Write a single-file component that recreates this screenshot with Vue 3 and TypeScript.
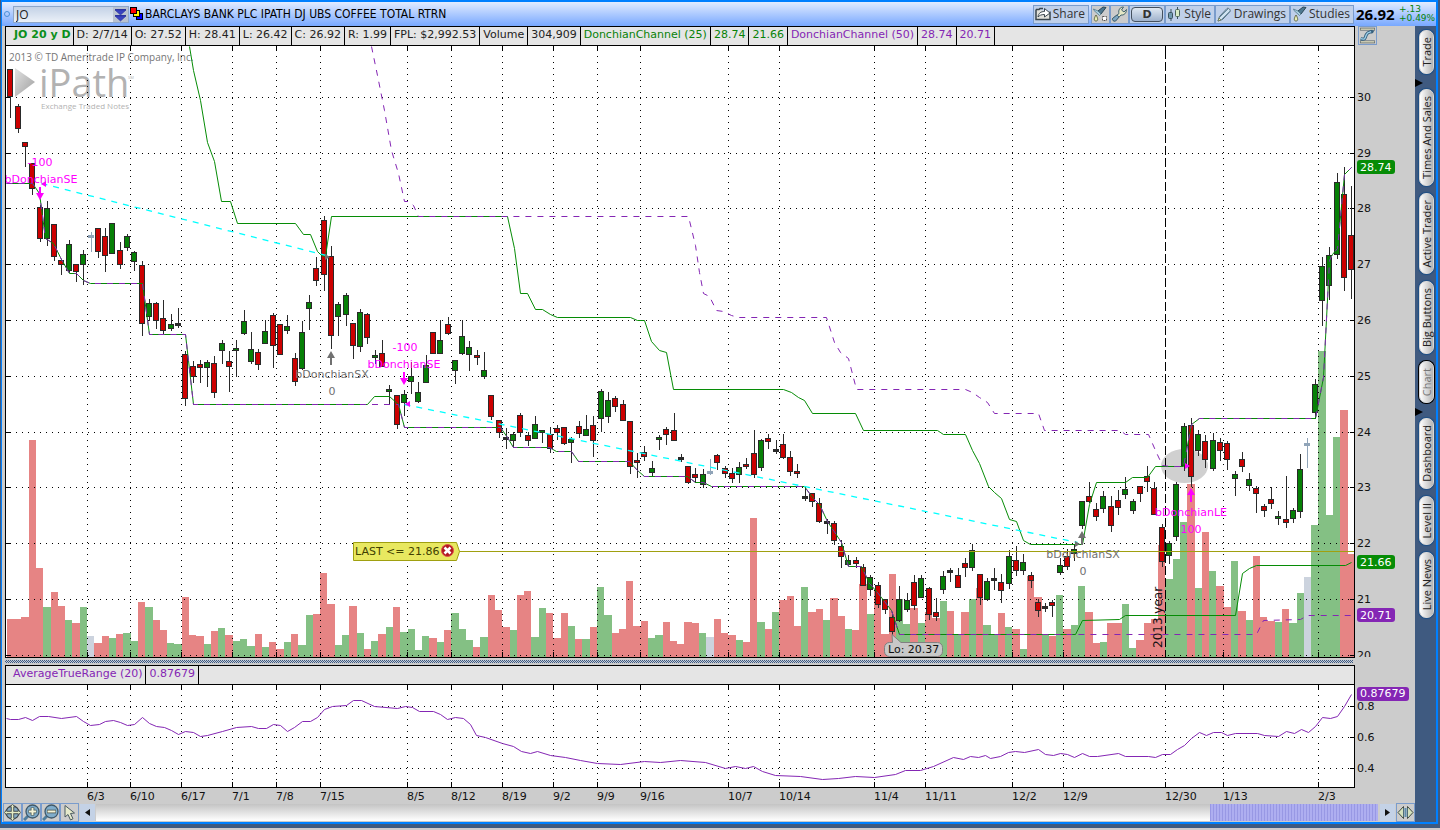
<script setup lang="ts">
import { ref } from 'vue'

type Cell = { text: string; tone: string }
type Pt = [number, number]

const symbol = ref('JO')
const scroll = ref(100)

const priceCells: Cell[] = [
  { text: 'JO 20 y D', tone: 'lead' },
  { text: 'D: 2/7/14', tone: '' },
  { text: 'O: 27.52', tone: '' },
  { text: 'H: 28.41', tone: '' },
  { text: 'L: 26.42', tone: '' },
  { text: 'C: 26.92', tone: '' },
  { text: 'R: 1.99', tone: '' },
  { text: 'FPL: $2,992.53', tone: '' },
  { text: 'Volume', tone: '' },
  { text: '304,909', tone: '' },
  { text: 'DonchianChannel (25)', tone: 'green' },
  { text: '28.74', tone: 'green' },
  { text: '21.66', tone: 'green' },
  { text: 'DonchianChannel (50)', tone: 'violet' },
  { text: '28.74', tone: 'violet' },
  { text: '20.71', tone: 'violet' },
]

const tabs = [
  { text: 'Trade', mark: false, active: false },
  { text: 'Times And Sales', mark: true, active: false },
  { text: 'Active Trader', mark: false, active: false },
  { text: 'Big Buttons', mark: false, active: false },
  { text: 'Chart', mark: false, active: true },
  { text: 'Dashboard', mark: true, active: false },
  { text: 'Level II', mark: false, active: false },
  { text: 'Live News', mark: false, active: false },
]

const dates: { x: number; text: string }[] = [
  { x: 87, text: '6/3' }, { x: 130, text: '6/10' }, { x: 181, text: '6/17' },
  { x: 232, text: '7/1' }, { x: 276, text: '7/8' }, { x: 320, text: '7/15' },
  { x: 407, text: '8/5' }, { x: 451, text: '8/12' }, { x: 502, text: '8/19' },
  { x: 553, text: '9/2' }, { x: 597, text: '9/9' }, { x: 640, text: '9/16' },
  { x: 728, text: '10/7' }, { x: 779, text: '10/14' }, { x: 874, text: '11/4' },
  { x: 925, text: '11/11' }, { x: 1012, text: '12/2' }, { x: 1063, text: '12/9' },
  { x: 1165, text: '12/30' }, { x: 1223, text: '1/13' }, { x: 1318, text: '2/3' },
]
const yearX = 1165
const levels = [
  { y: 97, text: '30' }, { y: 153, text: '29' }, { y: 208, text: '28' }, { y: 264, text: '27' },
  { y: 320, text: '26' }, { y: 376, text: '25' }, { y: 432, text: '24' }, { y: 487, text: '23' },
  { y: 543, text: '22' }, { y: 599, text: '21' }, { y: 655, text: '20' },
]
const rangeLevels = [
  { y: 706, text: '0.8' }, { y: 737, text: '0.6' }, { y: 768, text: '0.4' },
]

const barX = (i: number) => 10.4 + i * 7.287

/* volume: top of each bar and its tone (r down, g up, n unchanged) */
const volumeText = `619r 619r 617r 440r 568r 607g 592r 606r 620g 623r 607g 636n 643r 636r 638g 634r 633g 641g 602r 607g
620r 630r 643g 644g 597r 635r 636r 644g 631r 628g 635r 641g 639g 646g 634r 647g 642r 649r 642g 634r
645g 615g 614r 573r 604r 645g 635g 606r 633g 649r 641g 634r 627g 607r 632g 629g 650g 636g 638r 642g
630r 613g 629g 640g 647r 637g 595r 610r 627r 630g 595r 591r 637g 608g 613r 638r 613r 626g 639r 639g
627r 587g 615g 633r 629r 581r 626r 621r 638g 635g 622r 641r 644r 622r 623r 633g 637n 619r 633r 635r
640g 642r 518r 622g 629r 612g 600r 596r 626r 587g 612r 609r 620g 598r 616r 629g 630r 584r 614g 590r
634r 574r 599g 624g 608r 623g 612r 618r 601g 611r 634g 612r 599g 588r 625g 635g 613r 627g 629r 649g
576r 597r 635g 636r 595g 629r 625g 586g 612r 643r 642g 623r 623r 604g 648g 640r 623r 619r 545r 579g
559g 522g 484r 588g 532r 571g 586r 607r 561g 611r 620g 556r 617r 621r 622g 609r 623g 593g 577n 525g
351g 515g 437g 410r 554r`
const volumes = volumeText.split(/\s+/).map((s, i) => {
  const left = Math.round(barX(i) - 3.6)
  return { x: left, w: Math.round(barX(i + 1) - 3.6) - left, y: parseInt(s), tone: s.slice(-1) }
})

/* candles: high, body top, body bottom, low, tone */
const candleText = `69,69,96,117r 104,106,128,132r 142,142,146,166r 163,163,188,194r 205,207,238,241r 201,208,238,245g
224,224,256,260r 259,260,264,274r 240,244,270,272g 264,264,271,281r 250,254,264,284g 232,235,237,251n
228,228,251,257r 228,236,255,271r 223,223,253,253g 242,250,264,268r 234,236,247,250g 251,252,261,270g
261,265,323,335r 299,303,316,320g 302,303,320,328r 300,318,330,334r 314,324,328,330g 308,323,325,327d
351,354,398,405r 361,366,376,382r 360,364,367,382r 360,362,367,386g 356,363,392,397r 340,343,350,363g
351,361,366,391r 340,348,350,376g 310,321,333,334g 332,349,361,363g 349,352,364,369r 320,331,343,343g
313,315,345,367r 324,324,354,354r 315,326,330,333g 353,358,381,385r 321,332,368,369g 295,302,308,329g
257,268,280,285r 216,220,274,290r 246,256,335,348r 302,304,316,335g 293,295,314,325g 323,323,345,358r
309,312,346,351g 313,314,337,343r 350,355,357,363g 340,353,366,366r 385,389,391,404g 395,395,424,428r
390,394,402,415g 362,376,381,393g 382,392,401,402g 355,365,382,382g 332,332,353,353r 320,340,353,353g
317,324,333,334r 360,360,370,383g 320,336,353,354g 341,347,354,370g 350,355,357,364r 352,370,376,378g
395,395,416,419r 420,420,432,437r 428,437,439,448d 432,434,440,447g 413,415,432,436r 432,435,440,445r
416,424,438,438g 430,430,432,442g 427,434,448,452r 425,428,432,439r 427,427,443,444r 437,439,442,462g
421,426,433,437r 415,429,435,435g 416,425,440,456r 389,391,418,431g 392,400,416,422g 396,398,406,411r
400,404,420,420r 421,421,466,473r 453,460,462,477r 446,452,456,460r 461,468,472,475g 435,437,439,449g
427,429,434,444r 413,430,440,440r 454,457,459,461d 466,466,482,483r 468,474,477,482r 469,474,484,487g
459,471,473,474n 454,455,462,469r 466,468,473,477r 468,473,478,482r 462,467,474,482g 458,464,466,468r
430,453,474,477r 439,440,467,470g 434,438,441,448r 440,449,451,453d 434,444,457,458r 451,457,471,475r
464,471,473,477r 486,496,498,500d 493,493,501,506r 498,503,521,522r 519,521,523,533d 521,523,540,544r
540,546,556,567r 555,560,564,565g 557,560,563,567r 564,567,585,585r 575,577,589,595g 582,585,604,607r
599,599,609,613r 612,617,631,635r 586,599,620,621g 593,600,609,611g 575,582,605,609r 575,578,597,597g
587,588,614,619r 598,612,616,620r 571,576,589,593g 568,570,572,581d 568,575,587,587r 558,563,567,576r
544,550,567,570g 574,574,597,604r 578,581,599,600g 568,578,580,589d 574,582,590,602r 550,556,583,588g
546,560,570,575r 554,562,570,574g 572,575,580,587r 599,602,610,616r 603,606,608,611d 600,602,605,616r
558,565,572,574g 549,556,566,569r 545,549,553,560g 501,501,525,528g 482,496,501,502r 503,509,516,520r
491,496,508,512g 496,506,525,531r 490,500,507,514r 477,489,494,498g 499,501,510,513g 486,486,493,501r
466,476,481,491r 482,488,514,514r 524,527,561,566r 541,543,555,563g 482,484,536,540g 423,426,465,470g
418,425,476,486r 430,434,450,455g 435,441,459,467r 433,440,468,470g 438,442,450,460r 441,443,459,469r
471,474,478,495g 452,459,466,471r 473,479,485,490g 486,488,493,512r 504,506,510,516r 487,499,503,508r
511,516,518,524g 476,519,522,527r 508,510,518,522g 454,469,511,517g 438,443,445,467n 379,384,412,418g
257,266,300,325g 247,255,285,299g 173,182,254,258g 167,194,277,290r 186,235,269,298r`
const candles = candleText.split(/\s+/).map((s, i) => {
  const [high, top, bottom, low] = s.slice(0, -1).split(',').map(Number)
  return { x: Math.round(barX(i)), high, top, h: Math.max(bottom - top, 1), low, tone: s.slice(-1) }
})

const points = (p: Pt[]) => p.map((q) => q.join(',')).join(' ')

const closing: Pt[] = [[1183, 466], [1191, 424], [1199, 418], [1315, 418], [1323, 377], [1329, 260], [1332, 254], [1337, 248], [1344, 174], [1351, 167]]
const upper25 = points([
  [189, 46], [193, 70], [200, 100], [207, 142], [214, 161], [221, 201], [230, 201], [237, 223], [295, 223], [303, 234],
  [310, 234], [317, 251], [321, 255], [325, 256], [331, 216], [507, 216], [514, 248], [520, 293], [527, 293], [535, 309],
  [542, 309], [550, 314], [557, 317], [630, 317], [637, 320], [644, 320], [651, 341], [659, 350], [666, 352], [673, 389],
  [783, 389], [791, 392], [798, 397], [804, 400], [812, 413], [855, 413], [863, 430], [937, 430], [943, 434], [965, 434],
  [972, 450], [979, 463], [988, 486], [994, 492], [1001, 498], [1009, 519], [1016, 521], [1023, 540], [1030, 544],
  [1082, 544], [1089, 504], [1096, 482], [1125, 482], [1132, 477], [1147, 477], [1155, 466], ...closing,
])
const upper50 = points([
  [371, 46], [377, 75], [384, 110], [391, 150], [398, 173], [404, 201], [408, 201], [413, 205], [418, 216], [688, 216],
  [695, 245], [699, 272], [703, 293], [709, 296], [716, 310], [723, 311], [731, 315], [738, 317], [826, 317], [834, 342],
  [840, 352], [848, 358], [856, 389], [965, 389], [972, 392], [979, 397], [987, 402], [994, 413], [1038, 413], [1044, 430],
  [1120, 430], [1125, 434], [1148, 434], [1155, 450], [1162, 465], [1170, 466], ...closing,
])
const lowHead: Pt[] = [
  [6, 183], [32, 183], [39, 193], [45, 238], [53, 243], [61, 259], [69, 273], [76, 273], [83, 280], [90, 283], [142, 283],
  [149, 334], [185, 334], [193, 404],
]
const lowBody: Pt[] = [
  [398, 404], [404, 427], [500, 427], [507, 437], [513, 447], [549, 447], [556, 451], [571, 451], [578, 461], [629, 461],
  [637, 470], [644, 476], [687, 476], [695, 482], [703, 482], [711, 486], [804, 486], [812, 497], [819, 504], [827, 521],
  [841, 542], [848, 566], [861, 566], [869, 583], [877, 592], [891, 610], [899, 634],
]
const lower25 = points([
  ...lowHead, [367, 404], [374, 396], [389, 396], ...lowBody, [1075, 634], [1082, 620], [1119, 619], [1125, 615],
  [1235, 615], [1242, 573], [1249, 568], [1256, 565], [1345, 565], [1351, 562],
])
const lower50 = points([...lowHead, ...lowBody, [1256, 634], [1263, 620], [1300, 619], [1307, 615], [1351, 615]])

const averageRange = points([
  [6, 718], [10, 719], [18, 719], [25, 717], [32, 720], [39, 716], [48, 716], [61, 718], [76, 716], [83, 721], [90, 725],
  [99, 724], [105, 721], [113, 720], [120, 722], [127, 725], [134, 724], [142, 717], [149, 723], [156, 726], [164, 727],
  [171, 730], [178, 734], [185, 731], [193, 732], [200, 736], [207, 735], [222, 731], [236, 727], [251, 726], [258, 728],
  [266, 728], [273, 724], [280, 725], [287, 731], [294, 727], [302, 721], [310, 721], [317, 717], [324, 709], [332, 706],
  [346, 705], [353, 700], [361, 700], [374, 706], [397, 708], [405, 706], [412, 707], [419, 711], [433, 711], [440, 714],
  [447, 719], [455, 717], [463, 718], [470, 724], [476, 735], [485, 737], [502, 743], [513, 746], [521, 751], [530, 753],
  [537, 751], [550, 755], [565, 757], [580, 760], [597, 763], [620, 764], [644, 761], [660, 762], [680, 760], [705, 762],
  [725, 768], [735, 766], [745, 768], [753, 766], [762, 771], [775, 775], [800, 776], [822, 779], [838, 778], [855, 776],
  [874, 777], [895, 774], [905, 770], [920, 770], [933, 766], [953, 757], [963, 759], [970, 756], [978, 757], [985, 755],
  [990, 758], [1000, 756], [1008, 752], [1015, 751], [1024, 752], [1038, 749], [1045, 754], [1053, 755], [1060, 753],
  [1067, 754], [1074, 757], [1082, 753], [1089, 756], [1097, 756], [1118, 753], [1125, 756], [1148, 756], [1155, 757],
  [1162, 754], [1170, 754], [1177, 749], [1184, 745], [1191, 738], [1199, 732], [1206, 735], [1213, 732], [1221, 732],
  [1227, 735], [1235, 733], [1257, 733], [1264, 735], [1278, 736], [1286, 731], [1294, 733], [1301, 729], [1308, 732],
  [1315, 726], [1322, 717], [1330, 718], [1337, 716], [1344, 706], [1351, 694],
])

const orders = [
  { x: 40, y: 166, text: '-100', tone: 'sell' },
  { x: 41, y: 183, text: 'bDonchianSE', tone: 'sell' },
  { x: 332, y: 378, text: 'bDonchianSX', tone: 'exit' },
  { x: 332, y: 395, text: '0', tone: 'exit' },
  { x: 405, y: 351, text: '-100', tone: 'sell' },
  { x: 404, y: 368, text: 'bDonchianSE', tone: 'sell' },
  { x: 1083, y: 558, text: 'bDonchianSX', tone: 'exit' },
  { x: 1083, y: 575, text: '0', tone: 'exit' },
  { x: 1191, y: 516, text: 'bDonchianLE', tone: 'sell' },
  { x: 1191, y: 533, text: '100', tone: 'sell' },
]
const tags = [
  { y: 160, text: '28.74', tone: 'up' },
  { y: 555, text: '21.66', tone: 'up' },
  { y: 608, text: '20.71', tone: 'alt' },
]
</script>

<template>
  <div class="window">
    <header class="toolbar">
      <span class="dot"></span>
      <div class="symbol">
        <input v-model="symbol" aria-label="Symbol" type="text" />
        <button type="button" aria-label="Symbol list">
          <svg width="15" height="16" viewBox="0 0 15 16">
            <path d="M2 2.500h11M2 8.500h11" stroke="#3038a0" />
            <path d="M2 3h11l-5.500 5zM2 9h11l-5.500 5z" fill="#3a44c0" stroke="#26309a" stroke-width=".6" />
          </svg>
        </button>
      </div>
      <svg class="link" width="14" height="14" viewBox="0 0 14 14">
        <rect x="6.500" y="6.500" width="6" height="6" fill="#00f" stroke="#000" />
        <rect x="3.500" y="3.500" width="6" height="6" fill="#ff0" stroke="#000" />
        <rect x=".5" y=".5" width="6" height="6" fill="#f00" stroke="#000" />
      </svg>
      <h1>BARCLAYS BANK PLC IPATH DJ UBS COFFEE TOTAL RTRN</h1>
      <nav class="actions">
        <button type="button" class="share">
          <svg width="16" height="14" viewBox="0 0 16 14">
            <path d="M1 2.500h3l1-1h3M1 2.500v10h14v-8" fill="#e2e2dc" stroke="#3a464e" stroke-width="1.500" />
            <path d="M3 10c.5-4 3-5.500 6.500-5.500V1.500L15 6l-5.500 4V7.500C6 7.500 4.500 8.500 3 10z" fill="#fff" stroke="#3a464e" />
          </svg>
          Share
        </button>
        <button type="button" class="square gap" aria-label="Add study">
          <svg width="16" height="16" viewBox="0 0 16 16">
            <path d="M6 5 11 1l3 .5-5 6.500z" fill="#4e7890" stroke="#2c4858" />
            <path d="M1.500 3 6 5l3 3-1.500 1.500L2 4.500z" fill="#a9cfe0" stroke="#48707f" stroke-width=".7" />
            <path d="M4 9c-2 3-2.500 6 0 6s2-3 0-6z" fill="#e8efb4" stroke="#4b5030" stroke-width=".8" />
            <path d="M10.500 10.500h4v4h-4z" fill="#fff" stroke="#555" stroke-dasharray="2 1" />
          </svg>
        </button>
        <button type="button" class="square" aria-label="Settings">
          <svg width="16" height="16" viewBox="0 0 16 16">
            <path d="M1.500 12.500 8 7.500C7 4 9 1 12.500 1L10.500 4l2.500 2 2.500-2.500C15.500 7 13 9.500 10 9l-5.500 6c-2 .5-3.500-1-3-2.500z" fill="#e6e8c6" stroke="#42636e" />
            <path d="M1.500 12.500 6 9l2 2-3.500 4c-2 .5-3.500-1-3-2.500z" fill="#7ea7c2" stroke="#39586a" stroke-width=".8" />
          </svg>
        </button>
        <button type="button" class="period"><b>D</b></button>
        <button type="button" class="style">
          <svg width="14" height="16" viewBox="0 0 14 16">
            <path d="M4 3v12M10.500 1v12" stroke="#39535f" />
            <rect x="1.500" y="6.500" width="4" height="6" rx="1" fill="#6f99ad" stroke="#39535f" />
            <rect x="8.500" y="3.500" width="4" height="7" rx="1" fill="#d7ecc6" stroke="#4c6657" />
          </svg>
          Style
        </button>
        <button type="button" class="drawings">
          <svg width="15" height="15" viewBox="0 0 15 15">
            <path d="M1 14 2.500 9.500 10 1.500c1.500-1 4 1.500 3 3L5.500 12.500z" fill="#cfe2f0" stroke="#4b6879" />
            <path d="M3 10 11 2M5 12l8-8" stroke="#6c8ea4" fill="none" />
            <path d="M1 14l1-3 2 2z" fill="#f1eeb9" stroke="#57653d" stroke-width=".6" />
          </svg>
          Drawings
        </button>
        <button type="button" class="studies">
          <svg width="15" height="16" viewBox="0 0 15 16">
            <path d="M6 5 11 1l3 .5-5 6.500z" fill="#4e7890" stroke="#2c4858" />
            <path d="M1.500 3 6 5l3 3-1.500 1.500L2 4.500z" fill="#a9cfe0" stroke="#48707f" stroke-width=".7" />
            <path d="M4 9c-2 3-2.500 6 0 6s2-3 0-6z" fill="#e8efb4" stroke="#4b5030" stroke-width=".8" />
          </svg>
          Studies
        </button>
      </nav>
      <strong class="last">26.92</strong>
      <p class="change"><span>+.13</span><span>+0.49%</span></p>
    </header>

    <div class="body">
      <main class="charts">
        <div class="strip-row">
          <div class="strip">
            <span v-for="(c, i) in priceCells" :key="i" class="cell" :class="c.tone">{{ c.text }}</span>
          </div>
          <button type="button" class="curve" aria-label="Price scale">
            <svg width="17" height="17" viewBox="0 0 16 16">
              <path d="M1 2h14M1 14h14" stroke="#4a565c" stroke-width="2.400" />
              <path d="M1.500 2h13M1.500 14h13" stroke="#f3f0cd" stroke-width="1.200" />
              <path d="M1.500 11c5 1.500 4-1 5.500-4s3.500-2 6-3" stroke="#355f7d" stroke-width="3" fill="none" />
              <path d="M1.500 11c5 1.500 4-1 5.500-4s3.500-2 6-3" stroke="#9fd0ea" stroke-width="1.300" fill="none" />
              <path d="M11 2.500l3.500 1L12 6.500z" fill="#355f7d" />
            </svg>
          </button>
        </div>

        <svg class="price" viewBox="5 46 1410 612" role="img" aria-label="Price chart">
          <defs>
            <linearGradient id="fade" x1="0" x2="1" y1="0" y2="1">
              <stop offset="0" stop-color="#e2e2e2" />
              <stop offset="1" stop-color="#9e9e9e" />
            </linearGradient>
            <clipPath id="plot"><rect x="6" y="46" width="1348" height="611" /></clipPath>
          </defs>
          <rect x="5" y="46" width="1350" height="612" fill="#000" />
          <rect x="6" y="46" width="1348" height="611" fill="#fff" />

          <g clip-path="url(#plot)">
            <g class="logo">
              <text x="9" y="61" class="copyright">2013 © TD Ameritrade IP Company, Inc.</text>
              <path d="M15 68 35 82 15 97z" fill="url(#fade)" />
              <text x="39" y="97" class="brand">iPath</text>
              <text x="128" y="79" class="mark">SM</text>
              <text x="41" y="109" class="motto">Exchange Traded Notes</text>
            </g>
            <g shape-rendering="crispEdges">
              <rect v-for="(v, i) in volumes" :key="i" :x="v.x" :y="v.y" :width="v.w" :height="657 - v.y" :class="'vol-' + v.tone" />
            </g>
            <ellipse cx="1184.500" cy="466" rx="23.500" ry="17" fill="#d0d0d0" />
            <g class="grid" shape-rendering="crispEdges">
              <line v-for="l in levels" :key="l.text" x1="10" :y1="l.y + 0.5" x2="1354" :y2="l.y + 0.5" />
              <template v-for="d in dates" :key="d.text">
                <line :x1="d.x + 0.5" y1="50" :x2="d.x + 0.5" y2="657" :class="{ year: d.x === yearX }" />
                <path :d="`M${d.x + 0.5} 46v5M${d.x + 0.5} 652v5`" class="tick" />
              </template>
              <path v-for="l in levels" :key="'t' + l.text" :d="`M6 ${l.y + 0.5}h5M1350 ${l.y + 0.5}h4`" class="tick" />
            </g>
            <g shape-rendering="crispEdges">
              <g v-for="(c, i) in candles" :key="i" :class="'bar-' + c.tone">
                <line :x1="c.x + 0.5" :y1="c.high" :x2="c.x + 0.5" :y2="c.low + 1" />
                <rect :x="c.x - 2.5" :y="c.top + 0.5" width="5" :height="c.h" />
              </g>
            </g>
            <line x1="459" y1="551.500" x2="1354" y2="551.500" stroke="#a0a010" shape-rendering="crispEdges" />
            <g transform="translate(.5 .5)" fill="none">
              <g stroke="#068c06">
                <polyline :points="upper25" />
                <polyline :points="lower25" />
              </g>
              <g stroke="#8426b4" stroke-dasharray="6 6">
                <polyline :points="upper50" />
                <polyline :points="lower50" />
              </g>
              <path d="M41 183 330 256M404 404 1077 542" stroke="#0ff" stroke-width="1.300" stroke-dasharray="6 6" />
            </g>
            <g fill="#f0f">
              <path d="M39 187h2v6h3l-4 7-4-7h3zM403 372h2v6h3l-4 7-4-7h3zM1191 488l4 7h-3v7h-2v-7h-3z" />
              <path d="M41 184l5-3v6zM405 404l5-3v6zM1190 466l-5-3v6z" />
            </g>
            <g fill="#707070">
              <path d="M331 351l4 7h-3v7h-2v-7h-3zM1082 531l4 7h-3v7h-2v-7h-3z" />
              <path d="M330 257l-5-3v6zM1080 544l-5-3v6z" />
            </g>
            <text v-for="(o, i) in orders" :key="i" :x="o.x" :y="o.y" :class="o.tone" text-anchor="middle">{{ o.text }}</text>
            <text class="year-label" transform="translate(1162 648) rotate(-90)">2013 year</text>
            <path d="M353.500 542.500h103l3 9-3 9h-103z" fill="#e8e860" stroke="#a0a010" />
            <text x="355" y="555" class="alert">LAST &lt;= 21.86</text>
            <circle cx="447.500" cy="550.500" r="6" fill="#b01820" stroke="#e05048" />
            <path d="M444.500 547.500l6 6M450.500 547.500l-6 6" stroke="#fff" stroke-width="2.600" />
            <path d="M889.500 642.500h3l-.5-8 9 8h36.500a5 5 0 0 1 5 5v4a5 5 0 0 1-5 5h-48a5 5 0 0 1-5-5v-4a5 5 0 0 1 5-5z" fill="#c8c8c8" stroke="#808080" />
            <text x="888" y="653" class="low">Lo: 20.37</text>
          </g>

          <g class="axis">
            <text v-for="l in levels" :key="l.text" x="1357" :y="l.y + 4">{{ l.text }}</text>
            <rect x="1355" y="657" width="30" height="3" fill="#ccc" />
          </g>
          <g v-for="t in tags" :key="t.text">
            <rect x="1357" :y="t.y" width="38" height="14" rx="3" :class="t.tone" />
            <text x="1360" :y="t.y + 11" class="tag">{{ t.text }}</text>
          </g>
        </svg>

        <div class="splitter"></div>

        <div class="strip-row">
          <div class="strip">
            <span class="cell violet study">AverageTrueRange (20)</span>
            <span class="cell violet">0.87679</span>
          </div>
          <div class="axis-space"></div>
        </div>

        <svg class="range" viewBox="5 685 1410 118" role="img" aria-label="Average true range">
          <rect x="5" y="685" width="1350" height="103" fill="#000" />
          <rect x="6" y="685" width="1348" height="102" fill="#fff" />
          <g class="grid" shape-rendering="crispEdges">
            <line v-for="l in rangeLevels" :key="l.text" x1="10" :y1="l.y + 0.5" x2="1354" :y2="l.y + 0.5" />
            <template v-for="d in dates" :key="d.text">
              <line :x1="d.x + 0.5" y1="689" :x2="d.x + 0.5" y2="782" />
              <path :d="`M${d.x + 0.5} 685v5M${d.x + 0.5} 782v5`" class="tick" />
            </template>
            <path v-for="l in rangeLevels" :key="'t' + l.text" :d="`M6 ${l.y + 0.5}h5M1350 ${l.y + 0.5}h4`" class="tick" />
          </g>
          <polyline :points="averageRange" fill="none" stroke="#8426b4" transform="translate(.5 .5)" />
          <g class="axis">
            <text v-for="l in rangeLevels" :key="l.text" x="1357" :y="l.y + 4">{{ l.text }}</text>
            <text v-for="d in dates" :key="d.text" :x="d.x" y="800">{{ d.text }}</text>
          </g>
          <rect x="1357" y="687" width="52" height="14" rx="3" class="alt" />
          <text x="1360" y="697" class="tag">0.87679</text>
        </svg>

        <footer class="bottom">
          <button type="button" class="tool" aria-label="Pan">
            <svg width="17" height="17" viewBox="0 0 17 17">
              <circle cx="8.500" cy="8.500" r="6.500" fill="#86abc4" stroke="#3c464c" stroke-width="1.300" />
              <path d="M8.500 1v15M1 8.500h15" stroke="#3c464c" stroke-width="3.400" />
              <path d="M8.500 0l2 3h-4zM8.500 17l2-3h-4zM0 8.500l3-2v4zM17 8.500l-3-2v4z" fill="#e4ebc4" stroke="#3c464c" stroke-width=".6" />
              <path d="M8.500 2v13M2 8.500h13" stroke="#e4ebc4" stroke-width="1.600" />
            </svg>
          </button>
          <button type="button" class="tool" aria-label="Zoom in">
            <svg width="17" height="17" viewBox="0 0 17 17">
              <path d="M1 16l4-4" stroke="#4f7e9e" stroke-width="3" />
              <circle cx="9.500" cy="7.500" r="6.500" fill="#7facca" stroke="#3f586a" stroke-width="1.300" />
              <path d="M9.500 3.500v8M5.500 7.500h8" stroke="#49524a" stroke-width="3.600" />
              <path d="M9.500 4v7M6 7.500h7" stroke="#f4f4d8" stroke-width="2" />
            </svg>
          </button>
          <button type="button" class="tool" aria-label="Zoom out">
            <svg width="17" height="17" viewBox="0 0 17 17">
              <path d="M1 16l4-4" stroke="#4f7e9e" stroke-width="3" />
              <circle cx="9.500" cy="7.500" r="6.500" fill="#7facca" stroke="#3f586a" stroke-width="1.300" />
              <path d="M5 7.500h9" stroke="#49524a" stroke-width="3.600" />
              <path d="M5.500 7.500h8" stroke="#f4f4d8" stroke-width="2" />
            </svg>
          </button>
          <button type="button" class="tool" aria-label="Pointer">
            <svg width="17" height="17" viewBox="0 0 17 17">
              <path d="M4 1.500v11.500l3-2.500 2.500 5.500 2.500-1.300L9.500 9.500l4-.5z" fill="#e6eacb" stroke="#4a5a60" />
            </svg>
          </button>
          <button type="button" class="arrow" aria-label="Scroll left">
            <svg width="5" height="7" viewBox="0 0 5 7"><path d="M5 0v7L0 3.500z" fill="#111" /></svg>
          </button>
          <input v-model="scroll" type="range" min="0" max="100" aria-label="Time scroll" />
          <button type="button" class="arrow" aria-label="Scroll right">
            <svg width="5" height="7" viewBox="0 0 5 7"><path d="M0 0v7l5-3.500z" fill="#111" /></svg>
          </button>
          <button type="button" class="tool" aria-label="Expand">
            <svg width="17" height="17" viewBox="0 0 17 17">
              <path d="M6.500 2.500v12l-5.500-6zM10.500 2.500v12l5.500-6z" fill="#d5e2bd" stroke="#404a42" />
              <path d="M7 4v9M8.500 4v9M10 4v9" stroke="#5f8eac" />
            </svg>
          </button>
        </footer>
      </main>

      <aside class="side">
        <template v-for="t in tabs" :key="t.text">
          <span v-if="t.mark" class="pointer"></span>
          <button type="button" class="tab" :class="{ active: t.active }"><span>{{ t.text }}</span></button>
        </template>
      </aside>
    </div>
  </div>
</template>

<style>
html,
body {
  background: #cfcacb;
}
</style>

<style scoped>
* {
  box-sizing: border-box;
}
.window {
  margin-bottom: 2px;
  border: 1px solid #3f5a80;
  border-width: 0 2px 4px 1px;
  background: #ccc;
  font: 11px/13px 'DejaVu Sans', sans-serif;
  color: #222;
  box-shadow: inset 0 2px #0080ff, inset 1px 0 #0080ff, inset -2px 0 #0080ff, inset 0 -2px #0080ff;
  padding: 2px 2px 2px 1px;
}
button {
  margin: 0;
  padding: 0;
  font: inherit;
  color: inherit;
  border: 0;
  background: none;
}
button svg {
  display: block;
  flex: none;
}
.toolbar {
  height: 24px;
  display: flex;
  align-items: center;
  background: linear-gradient(#e2ecff, #78a8ff);
  font-family: 'Open Sans', 'Noto Sans', sans-serif;
}
.dot {
  width: 6px;
  height: 6px;
  margin: 0 3px 0 2px;
  border: 1px solid #4a90d8;
  border-radius: 50%;
}
.symbol {
  display: flex;
  width: 116px;
  height: 17px;
  border: 1px solid #8ea6c8;
  background: linear-gradient(#c4d2e6, #eaf0f8);
}
.symbol input {
  flex: 1;
  min-width: 0;
  padding: 0 2px;
  border: 0;
  background: none;
  font: 12px/15px 'Open Sans', sans-serif;
  color: #222;
}
.symbol button {
  width: 15px;
  background: #b9c2d0;
}
.link {
  margin: 0 1px 0 1px;
}
h1 {
  margin: 0;
  font: 12px/16px 'DejaVu Sans Condensed', 'Open Sans', sans-serif;
  color: #000;
  white-space: nowrap;
}
.actions {
  display: flex;
  margin-left: auto;
  color: #333;
  font-size: 12px;
}
.actions button {
  display: flex;
  align-items: center;
  justify-content: space-between;
  height: 19px;
  padding: 0 3px 0 1px;
  border: 1px solid #7a9ccc;
  background: #bfd0ea;
  line-height: 16px;
}
.actions .share { width: 56px; }
.actions .style { width: 50px; }
.actions .drawings { width: 75px; }
.actions .studies { width: 64px; }
.actions .square {
  width: 19px;
  padding: 0;
  background: #ccc;
}
.actions .gap {
  margin-left: 2px;
}
.actions .period {
  width: 36px;
  padding: 0;
}
.period b {
  flex: 1;
  height: 15px;
  margin: 0 1px;
  border: 1px solid #44505e;
  border-radius: 4px;
  background: linear-gradient(#dfe8f2, #9fb2cc);
  font: 700 11px/13px 'DejaVu Sans', sans-serif;
  text-align: center;
}
.last {
  width: 45px;
  padding-left: 2px;
  font: 700 15px/24px 'Open Sans', sans-serif;
  color: #000;
}
.change {
  width: 37px;
  margin: 0;
  font: 9px/9px 'DejaVu Sans', sans-serif;
  color: #078207;
}
.change span {
  display: block;
}
.body {
  display: flex;
}
.charts {
  flex: 1;
  min-width: 0;
  padding-left: 3px;
  display: flex;
  flex-direction: column;
}
.strip-row {
  display: flex;
}
.strip {
  flex: 1350;
  display: flex;
  height: 20px;
  border: 1px solid #000;
  background: #e5e5e5;
}
.axis-space {
  flex: 60;
}
.cell {
  padding: 0 3px;
  line-height: 16px;
  border-right: 1px solid #000;
  white-space: nowrap;
}
.cell.lead {
  padding-left: 8px;
  padding-right: 2px;
  font-weight: 700;
  color: #0a8f1a;
}
.cell.study {
  padding-left: 7px;
}
.green { color: #078207; }
.violet { color: #8426b4; }
.curve {
  width: 19px;
  height: 19px;
  margin: 0 38px 0 3px;
  border: 1px solid #7a9ccc;
}
.price,
.range {
  display: block;
  width: 100%;
}
.splitter {
  height: 3px;
  margin: 2px 62px 2px 0;
  background: repeating-conic-gradient(#3f5a80 0 25%, #c4cbd6 0 50%) 0 0 / 2px 2px;
}
.grid line {
  stroke: #000;
  stroke-dasharray: 1 5;
}
.grid .year {
  stroke-dasharray: 9 3;
}
.grid .tick {
  stroke: #000;
}
.vol-r { fill: #e68484; }
.vol-g { fill: #84c084; }
.vol-n { fill: #ccd3de; }
.bar-r line, .bar-g line, .bar-d line { stroke: #2a2a2a; }
.bar-r rect, .bar-g rect, .bar-d rect { stroke: #2a2a2a; }
.bar-r rect { fill: #cc0000; }
.bar-g rect { fill: #068006; }
.bar-d rect { fill: #2a2a2a; }
.bar-n line, .bar-n rect { stroke: #90a4b8; fill: #90a4b8; }
.copyright {
  font: 10px 'Open Sans', sans-serif;
  fill: #757575;
}
.brand {
  font: 38px 'Open Sans', sans-serif;
  fill: #b2b2b2;
}
.mark {
  font: 4px 'Open Sans', sans-serif;
  fill: #b2b2b2;
}
.motto {
  font: 8px 'Open Sans', sans-serif;
  fill: #b2b2b2;
}
.sell { fill: #f0f; }
.exit { fill: #707070; }
.year-label,
.low {
  fill: #111;
}
.year-label {
  font-size: 12px;
}
.alert { fill: #404000; }
.axis text { fill: #111; }
.up { fill: #068c06; }
.alt { fill: #8426b4; }
.tag { fill: #fff; }
.bottom {
  display: flex;
  height: 19px;
  margin-left: -2px;
}
.tool {
  width: 19px;
  height: 19px;
  border: 1px solid #7a9ccc;
}
.arrow {
  width: 15px;
  height: 17px;
  margin: 1px;
  display: grid;
  place-items: center;
  background: #c4d2e6;
}
.bottom input {
  flex: 1;
  min-width: 0;
  height: 17px;
  margin: 1px 1px 1px 0;
  appearance: none;
  background: linear-gradient(#c4c4c4, #fff);
}
.bottom input::-webkit-slider-thumb {
  appearance: none;
  width: 168px;
  height: 17px;
  background: repeating-linear-gradient(90deg, #9898e4 0 1px, #aeaef0 1px 3px);
}
.side {
  width: 21px;
  display: flex;
  flex-direction: column;
  align-items: flex-end;
  gap: 7px;
  padding: 4px 2px 0 0;
  background: #3f5a80;
}
.tab {
  width: 15px;
  padding: 6px 0;
  border: 1px solid #d8d8d8;
  border-radius: 7px;
  background: linear-gradient(90deg, #fff, #b4b4b4);
  box-shadow: 0 0 1px 1px #1d4f86;
  color: #222;
  font: 11px/13px 'Open Sans', 'Noto Sans', sans-serif;
  white-space: nowrap;
}
.tab span {
  display: block;
  writing-mode: vertical-rl;
  transform: rotate(180deg);
}
.tab.active {
  color: #777;
  box-shadow: 0 0 0 1px #000;
}
.pointer {
  align-self: flex-start;
  height: 8px;
  margin: -2px 0 -5px;
  border: 4px solid transparent;
  border-left: 8px solid #000;
  border-right: 0;
}
</style>
